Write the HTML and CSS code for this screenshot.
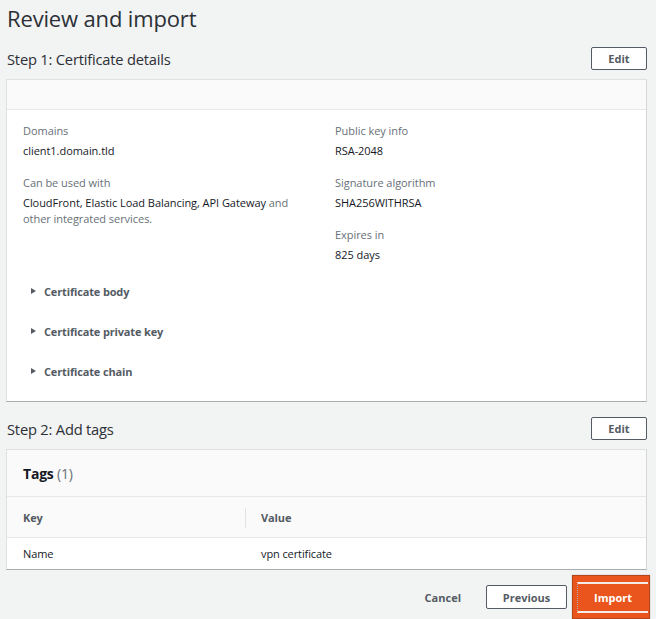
FILE: index.html
```html
<!DOCTYPE html>
<html lang="en">
<head>
<meta charset="utf-8">
<title>Review and import</title>
<link rel="stylesheet" href="styles.css">
</head>
<body>
<main class="page">
  <h1 class="title">Review and import</h1>

  <div class="step-head">
    <h2 class="step-title">Step 1: Certificate details</h2>
    <button class="btn btn-normal" type="button">Edit</button>
  </div>

  <section class="card">
    <div class="card-top"></div>
    <div class="card-body">
      <div class="cols">
        <div class="col">
          <div class="kv">
            <div class="label">Domains</div>
            <div class="value">client1.domain.tld</div>
          </div>
          <div class="kv">
            <div class="label">Can be used with</div>
            <div class="value">CloudFront, Elastic Load Balancing, API Gateway <span class="muted">and</span><br><span class="muted">other integrated services.</span></div>
          </div>
        </div>
        <div class="col">
          <div class="kv">
            <div class="label">Public key info</div>
            <div class="value">RSA-2048</div>
          </div>
          <div class="kv">
            <div class="label">Signature algorithm</div>
            <div class="value">SHA256WITHRSA</div>
          </div>
          <div class="kv">
            <div class="label">Expires in</div>
            <div class="value">825 days</div>
          </div>
        </div>
      </div>
      <div class="expanders">
        <div class="expander"><span class="caret"></span>Certificate body</div>
        <div class="expander"><span class="caret"></span>Certificate private key</div>
        <div class="expander"><span class="caret"></span>Certificate chain</div>
      </div>
    </div>
  </section>

  <div class="step-head">
    <h2 class="step-title">Step 2: Add tags</h2>
    <button class="btn btn-normal" type="button">Edit</button>
  </div>

  <section class="card">
    <div class="tags-head">
      <h3 class="tags-title">Tags <span class="count">(1)</span></h3>
    </div>
    <table class="tags-table">
      <thead>
        <tr>
          <th class="th-key"><span>Key</span></th>
          <th class="th-value">Value</th>
        </tr>
      </thead>
      <tbody>
        <tr>
          <td>Name</td>
          <td class="td-value">vpn certificate</td>
        </tr>
      </tbody>
    </table>
  </section>

  <div class="footer">
    <button class="btn btn-link" type="button">Cancel</button>
    <button class="btn btn-prev" type="button">Previous</button>
    <div class="import-wrap">
      <button class="btn btn-primary" type="button">Import</button>
    </div>
  </div>
</main>
</body>
</html>
```

FILE: styles.css
```css
* { box-sizing: border-box; }

html, body {
  margin: 0;
  padding: 0;
}

body {
  background: #f2f3f3;
  font-family: "Open Sans", "Noto Sans", sans-serif;
  color: #16191f;
  width: 656px;
  height: 619px;
  overflow: hidden;
}

.page {
  padding: 4px 9px 0 6px;
}

.title {
  margin: 0 0 15px 1px;
  font-size: 22px;
  line-height: 28px;
  font-weight: 400;
  color: #2c3036;
  letter-spacing: -0.15px;
}

.step-head {
  display: flex;
  justify-content: space-between;
  align-items: center;
  height: 23px;
  margin-bottom: 9px;
}

.step-title {
  margin: 0 0 0 1px;
  font-size: 14.7px;
  font-weight: 400;
  color: #2c3036;
  letter-spacing: -0.2px;
}

.btn {
  font-family: "Open Sans", "Noto Sans", sans-serif;
  font-weight: 700;
  font-size: 11px;
  cursor: pointer;
  color: #545b64;
  background: transparent;
  border: 0;
  padding: 0;
}

.btn-normal {
  width: 56px;
  height: 23px;
  background: #fff;
  border: 1px solid #545b64;
  border-radius: 2px;
}

.card {
  background: #fff;
  border: 1px solid #dfe1e1;
  border-bottom: 1px solid #a9adb0;
  border-right: 1px solid #d4d6d7;
  margin-bottom: 15px;
}

.card-top {
  height: 30px;
  background: #fafafa;
  border-bottom: 1px solid #e6e8e8;
}

.card-body {
  padding: 13px 16px 10px 16px;
}

.cols {
  display: grid;
  grid-template-columns: 312px 1fr;
}

.kv {
  margin-bottom: 16px;
  font-size: 11px;
  line-height: 16px;
  letter-spacing: -0.05px;
}

.label {
  color: #687078;
  margin-bottom: 4px;
}

.value {
  color: #16191f;
}

.muted { color: #687078; }

.expanders {
  margin-top: -8px;
}

.expander {
  height: 40px;
  display: flex;
  align-items: center;
  padding-left: 8px;
  font-size: 11px;
  font-weight: 700;
  color: #545b64;
  letter-spacing: -0.15px;
}

.caret {
  width: 0;
  height: 0;
  border-left: 5px solid #545b64;
  border-top: 3.5px solid transparent;
  border-bottom: 3.5px solid transparent;
  margin-right: 8px;
}

.tags-head {
  height: 47px;
  display: flex;
  align-items: center;
  padding-left: 16px;
  background: #fafafa;
  border-bottom: 1px solid #e6e8e8;
}

.tags-title {
  margin: 0;
  font-size: 14px;
  font-weight: 700;
  color: #16191f;
  letter-spacing: -0.2px;
}

.count {
  font-weight: 400;
  color: #687078;
}

.tags-table {
  width: 100%;
  border-collapse: collapse;
  font-size: 11px;
  letter-spacing: -0.1px;
}

.tags-table th {
  height: 40px;
  background: #fafafa;
  text-align: left;
  font-weight: 700;
  color: #545b64;
  border-bottom: 1px solid #e6e8e8;
  padding: 2px 0 0 0;
}

.th-key {
  width: 239px;
  padding-left: 16px !important;
}

.th-key span {
  display: block;
  border-right: 1px solid #e1e4e4;
  line-height: 20px;
}

.th-value, .td-value {
  padding-left: 15px !important;
}

.tags-table td {
  height: 32px;
  padding: 0 0 0 16px;
  color: #16191f;
}

.footer {
  display: flex;
  justify-content: flex-end;
  align-items: center;
  margin-top: -10px;
  margin-right: -3px;
}

.btn-link {
  margin-right: 25px;
}

.btn-prev {
  width: 81px;
  height: 24px;
  background: #fff;
  border: 1px solid #545b64;
  border-radius: 2px;
  margin-right: 5px;
}

.import-wrap {
  width: 78px;
  height: 44px;
  background: #e9551d;
  border: 1px solid #b7451a;
  padding: 6px 1px 5px 4px;
  box-shadow: 0 0 1px #999;
}

.btn-primary {
  width: 100%;
  height: 100%;
  color: #fff;
  background: transparent;
  border-top: 2px solid #f4ece8;
  border-bottom: 2px solid #f4ece8;
  border-left: 1px dotted #b0a8a4;
  border-radius: 0;
}
```
